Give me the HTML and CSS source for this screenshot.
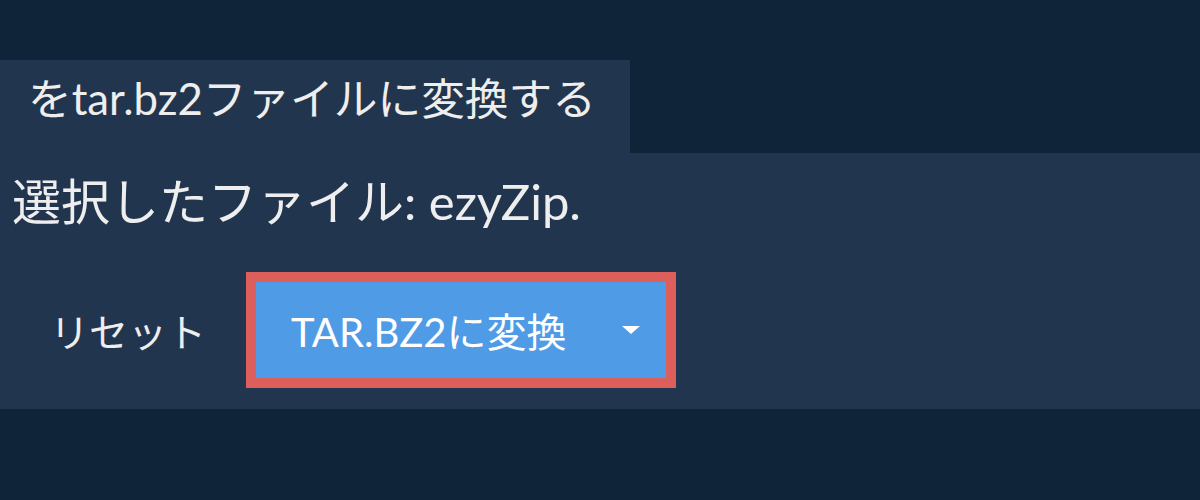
FILE: index.html
```html
<!DOCTYPE html>
<html lang="ja">
<head>
<meta charset="utf-8">
<link rel="stylesheet" href="styles.css">
</head>
<body>
<div class="page">
  <div class="tab">をtar.bz2ファイルに変換する</div>
  <div class="panel">
    <div class="selected">選択したファイル: ezyZip.</div>
    <div class="actions">
      <button class="reset">リセット</button>
      <div class="convert-ring">
        <button class="convert">
          <span class="label">TAR.BZ2に変換</span>
          <span class="caret"></span>
        </button>
      </div>
    </div>
  </div>
</div>
</body>
</html>
```
FILE: styles.css
```css
* { box-sizing: border-box; }
html, body {
  margin: 0;
  padding: 0;
  background: #0f2339;
}
body {
  width: 1200px;
  height: 500px;
  overflow: hidden;
  font-family: Lato, "Noto Sans CJK JP", sans-serif;
  color: #eeeeee;
}
.page {
  padding-top: 60px;
}
.tab {
  width: 630px;
  height: 93px;
  background: #21364e;
  display: flex;
  align-items: center;
  padding-left: 28px;
  padding-bottom: 16px;
  font-size: 43.7px;
  line-height: 1;
}
.panel {
  height: 256px;
  background: #21364e;
  display: flex;
  flex-direction: column;
  padding-left: 12px;
}
.selected {
  font-size: 49px;
  line-height: 1;
  margin-top: 24px;
}
.actions {
  display: flex;
  align-items: center;
  margin-top: 46px;
}
.reset {
  background: none;
  border: none;
  color: #eeeeee;
  font-family: inherit;
  font-size: 39px;
  padding: 0;
  margin-left: 38px;
  width: 196px;
  text-align: left;
}
.convert-ring {
  background: #dc5f5c;
  padding: 10px;
}
.convert {
  width: 410px;
  height: 96px;
  background: #4f9be6;
  border: none;
  color: #ffffff;
  font-family: inherit;
  font-size: 40px;
  display: flex;
  align-items: center;
  padding: 0 26px 0 35px;
}
.label {
  flex: 1;
  text-align: left;
}
.caret {
  width: 0;
  height: 0;
  border-left: 9px solid transparent;
  border-right: 9px solid transparent;
  border-top: 8px solid #ffffff;
}
```
